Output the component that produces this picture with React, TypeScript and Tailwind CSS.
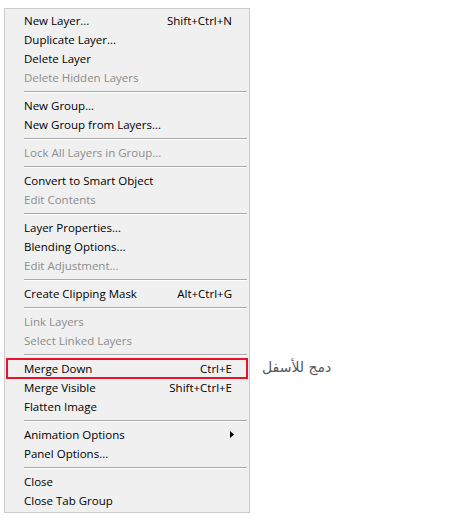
import React from 'react';

type Item =
  | { kind: 'sep' }
  | { kind: 'item'; label: string; shortcut?: string; disabled?: boolean; submenu?: boolean; marked?: boolean };

const items: Item[] = [
  { kind: 'item', label: 'New Layer...', shortcut: 'Shift+Ctrl+N' },
  { kind: 'item', label: 'Duplicate Layer...' },
  { kind: 'item', label: 'Delete Layer' },
  { kind: 'item', label: 'Delete Hidden Layers', disabled: true },
  { kind: 'sep' },
  { kind: 'item', label: 'New Group...' },
  { kind: 'item', label: 'New Group from Layers...' },
  { kind: 'sep' },
  { kind: 'item', label: 'Lock All Layers in Group...', disabled: true },
  { kind: 'sep' },
  { kind: 'item', label: 'Convert to Smart Object' },
  { kind: 'item', label: 'Edit Contents', disabled: true },
  { kind: 'sep' },
  { kind: 'item', label: 'Layer Properties...' },
  { kind: 'item', label: 'Blending Options...' },
  { kind: 'item', label: 'Edit Adjustment...', disabled: true },
  { kind: 'sep' },
  { kind: 'item', label: 'Create Clipping Mask', shortcut: 'Alt+Ctrl+G' },
  { kind: 'sep' },
  { kind: 'item', label: 'Link Layers', disabled: true },
  { kind: 'item', label: 'Select Linked Layers', disabled: true },
  { kind: 'sep' },
  { kind: 'item', label: 'Merge Down', shortcut: 'Ctrl+E', marked: true },
  { kind: 'item', label: 'Merge Visible', shortcut: 'Shift+Ctrl+E' },
  { kind: 'item', label: 'Flatten Image' },
  { kind: 'sep' },
  { kind: 'item', label: 'Animation Options', submenu: true },
  { kind: 'item', label: 'Panel Options...' },
  { kind: 'sep' },
  { kind: 'item', label: 'Close' },
  { kind: 'item', label: 'Close Tab Group' },
];

export default function App() {
  return (
    <div className="w-[472px] h-[522px] bg-white pt-[8px] pl-[4px] font-['Open_Sans','Noto_Sans',sans-serif] text-[11.5px]">
      <div className="w-[246px] bg-[#f0f0f0] border border-[#cccccc] py-[2px]">
        {items.map((it, i) =>
          it.kind === 'sep' ? (
            <div key={i} className="ml-[19px] mr-[2px] mt-[4px] mb-[3px] border-t border-[#a9a9a9] border-b border-b-white" />
          ) : (
            <div
              key={i}
              className={`relative h-[19px] flex items-center pl-[19px] pr-[17px] ${
                it.disabled ? 'text-[#8d8d8d]' : 'text-black'
              }`}
            >
              <span className="flex-1 whitespace-nowrap">{it.label}</span>
              {it.shortcut && <span className="whitespace-nowrap">{it.shortcut}</span>}
              {it.submenu && (
                <svg width="4" height="7" viewBox="0 0 4 7" className="-mr-[2px]">
                  <path d="M0 0 L4 3.5 L0 7 Z" fill="#000" />
                </svg>
              )}
              {it.marked && (
                <>
                  <div className="absolute left-[1px] right-[1px] top-[-1px] bottom-[-1px] border-2 border-[#e8132a]" />
                  <span
                    dir="rtl"
                    className="absolute left-[257px] top-[-2px] whitespace-nowrap text-[14px] text-[#555555] font-['DejaVu_Sans',sans-serif]"
                  >
                    دمج للأسفل
                  </span>
                </>
              )}
            </div>
          )
        )}
      </div>
    </div>
  );
}
